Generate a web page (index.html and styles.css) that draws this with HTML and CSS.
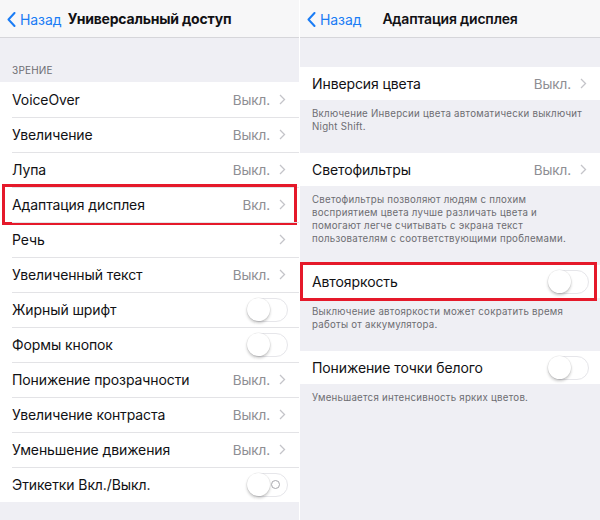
FILE: index.html
```html
<!DOCTYPE html>
<html lang="ru">
<head>
<meta charset="utf-8">
<link rel="stylesheet" href="styles.css">
</head>
<body>
<div class="screens">
  <section class="panel">
    <header class="nav">
      <span class="back"><svg class="back-ico" width="9" height="15" viewBox="0 0 9 15"><polyline points="7.5,1 1.5,7.5 7.5,14" fill="none" stroke="#1a7cf5" stroke-width="2" stroke-linecap="round" stroke-linejoin="round"/></svg>Назад</span>
      <span class="title bold">Универсальный доступ</span>
    </header>
    <div class="group-head">ЗРЕНИЕ</div>
    <ul class="list">
      <li class="row"><span class="label">VoiceOver</span><span class="value">Выкл.</span><svg class="chev" width="7" height="11" viewBox="0 0 7 11"><polyline points="1,1 5.5,5.5 1,10" fill="none" stroke="#c4c4c9" stroke-width="1.3"/></svg></li>
      <li class="row"><span class="label">Увеличение</span><span class="value">Выкл.</span><svg class="chev" width="7" height="11" viewBox="0 0 7 11"><polyline points="1,1 5.5,5.5 1,10" fill="none" stroke="#c4c4c9" stroke-width="1.3"/></svg></li>
      <li class="row"><span class="label">Лупа</span><span class="value">Выкл.</span><svg class="chev" width="7" height="11" viewBox="0 0 7 11"><polyline points="1,1 5.5,5.5 1,10" fill="none" stroke="#c4c4c9" stroke-width="1.3"/></svg></li>
      <li class="row marked"><span class="label">Адаптация дисплея</span><span class="value">Вкл.</span><svg class="chev" width="7" height="11" viewBox="0 0 7 11"><polyline points="1,1 5.5,5.5 1,10" fill="none" stroke="#c4c4c9" stroke-width="1.3"/></svg></li>
      <li class="row"><span class="label">Речь</span><svg class="chev" width="7" height="11" viewBox="0 0 7 11"><polyline points="1,1 5.5,5.5 1,10" fill="none" stroke="#c4c4c9" stroke-width="1.3"/></svg></li>
      <li class="row"><span class="label">Увеличенный текст</span><span class="value">Выкл.</span><svg class="chev" width="7" height="11" viewBox="0 0 7 11"><polyline points="1,1 5.5,5.5 1,10" fill="none" stroke="#c4c4c9" stroke-width="1.3"/></svg></li>
      <li class="row"><span class="label">Жирный шрифт</span><span class="toggle"><span class="knob"></span></span></li>
      <li class="row"><span class="label">Формы кнопок</span><span class="toggle"><span class="knob"></span></span></li>
      <li class="row"><span class="label">Понижение прозрачности</span><span class="value">Выкл.</span><svg class="chev" width="7" height="11" viewBox="0 0 7 11"><polyline points="1,1 5.5,5.5 1,10" fill="none" stroke="#c4c4c9" stroke-width="1.3"/></svg></li>
      <li class="row"><span class="label">Увеличение контраста</span><span class="value">Выкл.</span><svg class="chev" width="7" height="11" viewBox="0 0 7 11"><polyline points="1,1 5.5,5.5 1,10" fill="none" stroke="#c4c4c9" stroke-width="1.3"/></svg></li>
      <li class="row"><span class="label">Уменьшение движения</span><span class="value">Выкл.</span><svg class="chev" width="7" height="11" viewBox="0 0 7 11"><polyline points="1,1 5.5,5.5 1,10" fill="none" stroke="#c4c4c9" stroke-width="1.3"/></svg></li>
      <li class="row"><span class="label">Этикетки Вкл./Выкл.</span><span class="toggle labeled"><span class="knob"></span><span class="ring"></span></span></li>
    </ul>
  </section>

  <section class="panel">
    <header class="nav">
      <span class="back"><svg class="back-ico" width="9" height="15" viewBox="0 0 9 15"><polyline points="7.5,1 1.5,7.5 7.5,14" fill="none" stroke="#1a7cf5" stroke-width="2" stroke-linecap="round" stroke-linejoin="round"/></svg>Назад</span>
      <span class="title">Адаптация дисплея</span>
    </header>
    <div class="spacer"></div>
    <ul class="list">
      <li class="row short"><span class="label">Инверсия цвета</span><span class="value">Выкл.</span><svg class="chev" width="7" height="11" viewBox="0 0 7 11"><polyline points="1,1 5.5,5.5 1,10" fill="none" stroke="#c4c4c9" stroke-width="1.3"/></svg></li>
    </ul>
    <p class="foot">Включение Инверсии цвета автоматически выключит<br>Night Shift.</p>
    <ul class="list">
      <li class="row short"><span class="label">Светофильтры</span><span class="value">Выкл.</span><svg class="chev" width="7" height="11" viewBox="0 0 7 11"><polyline points="1,1 5.5,5.5 1,10" fill="none" stroke="#c4c4c9" stroke-width="1.3"/></svg></li>
    </ul>
    <p class="foot">Светофильтры позволяют людям с плохим<br>восприятием цвета лучше различать цвета и<br>помогают легче считывать с экрана текст<br>пользователям с соответствующими проблемами.</p>
    <ul class="list">
      <li class="row short marked wide"><span class="label">Автояркость</span><span class="toggle"><span class="knob"></span></span></li>
    </ul>
    <p class="foot">Выключение автояркости может сократить время<br>работы от аккумулятора.</p>
    <ul class="list">
      <li class="row short"><span class="label">Понижение точки белого</span><span class="toggle"><span class="knob"></span></span></li>
    </ul>
    <p class="foot">Уменьшается интенсивность ярких цветов.</p>
  </section>
</div>
</body>
</html>
```

FILE: styles.css
```css
* { box-sizing: border-box; }
html, body { margin: 0; padding: 0; }
body {
  width: 600px;
  height: 520px;
  overflow: hidden;
  background: #ffffff;
  font-family: Inter, "Noto Sans", "Liberation Sans", sans-serif;
  color: #111114;
}
.screens {
  display: flex;
  gap: 1px;
  height: 520px;
}
.panel {
  width: 300px;
  flex: none;
  background: #efeff4;
  display: flex;
  flex-direction: column;
}
.panel:first-child { width: 299px; }
.nav {
  height: 38px;
  flex: none;
  background: #f7f7f8;
  border-bottom: 1px solid #d6d6da;
  position: relative;
  display: flex;
  align-items: center;
  justify-content: center;
}
.back {
  position: absolute;
  left: 7px;
  top: 11px;
  display: flex;
  align-items: center;
  gap: 4px;
  color: #1a7cf5;
  font-size: 14px;
  letter-spacing: -0.1px;
}
.title {
  font-size: 14px;
  font-weight: 600;
  letter-spacing: -0.2px;
}
.title.bold { font-weight: 700; }
.group-head {
  height: 44px;
  flex: none;
  display: flex;
  align-items: flex-end;
  padding: 0 12px 6px;
  font-size: 10px;
  color: #6d6d72;
  letter-spacing: 0.2px;
}
.spacer { height: 29px; flex: none; }
.list {
  list-style: none;
  margin: 0;
  padding: 0;
  background: #fff;
}
.row {
  height: 35px;
  display: flex;
  align-items: center;
  padding: 0 12px;
  position: relative;
  font-size: 14px;
  letter-spacing: -0.1px;
}
.row.short { height: 33px; }
.row + .row::before {
  content: "";
  position: absolute;
  top: 0;
  left: 12px;
  right: 0;
  height: 1px;
  background: #e3e3e6;
}
.label { flex: 1; }
.value {
  color: #8e8e93;
  font-size: 13.5px;
  margin-right: 9px;
}
.chev { flex: none; margin-right: 1px; }
.toggle {
  width: 41px;
  height: 24px;
  border-radius: 12px;
  border: 1.5px solid #e6e6ea;
  background: #fff;
  position: relative;
  flex: none;
  margin-right: -1px;
}
.knob {
  position: absolute;
  left: -1px;
  top: -1px;
  width: 23px;
  height: 23px;
  border-radius: 50%;
  background: #fff;
  box-shadow: 0 2px 3px rgba(0,0,0,0.22), 0 0 0 0.5px rgba(0,0,0,0.08);
}
.ring {
  position: absolute;
  right: 7px;
  top: 6px;
  width: 9px;
  height: 9px;
  border-radius: 50%;
  border: 1.3px solid #a8a8ad;
}
.marked::after {
  content: "";
  position: absolute;
  left: 2px;
  right: 2px;
  top: -3px;
  bottom: -3px;
  border: 3px solid #e5192a;
  pointer-events: none;
}
.marked.wide::after { left: 0; right: 3px; }
.foot {
  margin: 0;
  padding: 7px 10px 20px 12px;
  font-size: 9.7px;
  letter-spacing: 0.25px;
  line-height: 13px;
  color: #6d6d72;
  white-space: nowrap;
}
```
